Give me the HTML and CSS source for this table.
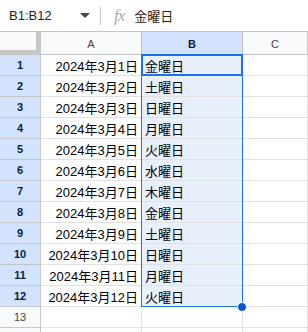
FILE: index.html
```html
<!DOCTYPE html>
<html lang="ja">
<head>
  <meta charset="UTF-8">
  <title>Sheet</title>
  <link rel="stylesheet" href="styles.css">
</head>
<body>
  <!-- Name box + formula input -->
  <div class="formula-bar">
    <div class="name-box">
      <span>B1:B12</span>
      <span class="caret"></span>
    </div>
    <div class="divider"></div>
    <span class="fx">fx</span>
    <span class="formula">金曜日</span>
  </div>

  <div class="sheet">
    <div class="grid" id="grid">
      <div class="corner"></div>
      <div class="col-head">A</div>
      <div class="col-head selected">B</div>
      <div class="col-head">C</div>
    </div>
    <!-- Selected range B1:B12 -->
    <div class="selection">
      <div class="active-cell"></div>
      <div class="fill-handle"></div>
    </div>
  </div>

  <script src="app.js"></script>
</body>
</html>
```

FILE: styles.css
```css
* {
  margin: 0;
  padding: 0;
  box-sizing: border-box;
}

body {
  background: #fff;
  font-family: "Liberation Sans", Arial, "Noto Sans CJK JP", sans-serif;
  color: #000;
  width: 308px;
  height: 332px;
  overflow: hidden;
}

/* Formula bar */
.formula-bar {
  height: 32px;
  display: flex;
  align-items: center;
  border-bottom: 1px solid #c4c7c5;
  font-size: 13px;
  color: #1f1f1f;
}

.name-box {
  width: 100px;
  display: flex;
  align-items: center;
  justify-content: space-between;
  padding: 0 10px 0 9px;
}

.caret {
  width: 0;
  height: 0;
  border-left: 5px solid transparent;
  border-right: 5px solid transparent;
  border-top: 5px solid #444746;
}

.divider {
  width: 1px;
  height: 18px;
  background: #c4c7c5;
}

.fx {
  font-family: "Liberation Serif", "Times New Roman", serif;
  font-style: italic;
  font-size: 17px;
  color: #a8abaa;
  margin: 0 10px 0 13px;
  letter-spacing: -1px;
}

.formula {
  font-size: 13px;
}

/* Grid */
.sheet {
  position: relative;
}

.grid {
  display: grid;
  grid-template-columns: 41px 101px 101px 1fr;
  grid-template-rows: 23px;
  grid-auto-rows: 21px;
  font-size: 13px;
}

.grid > div {
  border-right: 1px solid #e1e1e1;
  border-bottom: 1px solid #e1e1e1;
  white-space: nowrap;
  overflow: hidden;
}

.corner {
  background: #f8f9fa;
  border-right: 5px solid #c4c7c5 !important;
  border-bottom: 5px solid #c4c7c5 !important;
}

.grid > .col-head {
  background: #f8f9fa;
  border-right-color: #c4c7c5;
  border-bottom-color: #c4c7c5;
  color: #444746;
  font-size: 11px;
  display: flex;
  align-items: center;
  justify-content: center;
  padding-top: 2px;
}

.grid > .col-head.selected {
  background: #d3e3fd;
  color: #041e49;
  font-weight: bold;
}

.grid > .row-head {
  background: #f8f9fa;
  border-right-color: #c4c7c5;
  border-bottom-color: #c4c7c5;
  color: #444746;
  font-size: 11px;
  display: flex;
  align-items: center;
  justify-content: center;
}

.grid > .row-head.selected {
  background: #d3e3fd;
  color: #041e49;
  font-weight: bold;
}

.cell {
  display: flex;
  align-items: center;
  padding: 0 3px;
}

.cell.num {
  justify-content: flex-end;
}

.cell.in-range {
  background: #e8f0fe;
}

.selection {
  position: absolute;
  left: 141px;
  top: 22px;
  width: 102px;
  height: 253px;
  border: 1px solid #1a73e8;
  pointer-events: none;
}

.active-cell {
  position: absolute;
  left: -1px;
  top: -1px;
  width: 102px;
  height: 22px;
  border: 2px solid #1a73e8;
}

.fill-handle {
  position: absolute;
  right: -5px;
  bottom: -6px;
  width: 10px;
  height: 10px;
  border-radius: 50%;
  background: #0b57d0;
  border: 1px solid #fff;
}
```

FILE: app.js
```js
// Build rows: date in A, weekday in B; last row is only a sliver
var grid = document.getElementById('grid');
var days = ['日', '月', '火', '水', '木', '金', '土'];

function add(cls, text) {
  var d = document.createElement('div');
  d.className = cls;
  d.textContent = text || '';
  grid.appendChild(d);
}

for (var r = 1; r <= 14; r++) {
  var sel = r <= 12;
  add('row-head' + (sel ? ' selected' : ''), r < 14 ? r : '');
  if (sel) {
    var dt = new Date(2024, 2, r);
    add('cell num', '2024年3月' + r + '日');
    add('cell in-range', days[dt.getDay()] + '曜日');
  } else {
    add('cell');
    add('cell');
  }
  add('cell');
}
```
